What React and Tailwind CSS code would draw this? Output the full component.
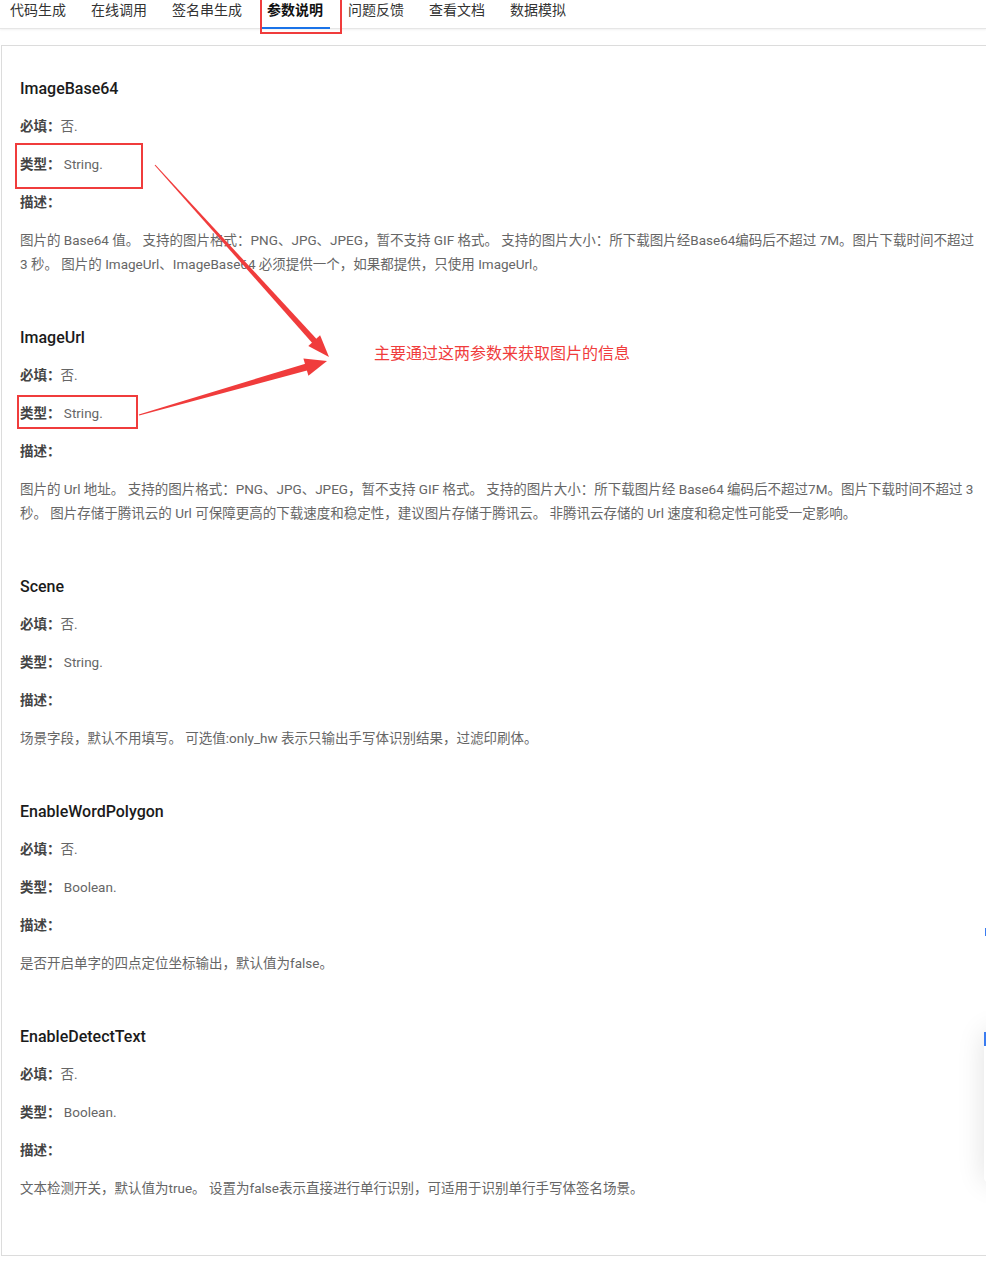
import { useState } from 'react';

const TABS = ['代码生成', '在线调用', '签名串生成', '参数说明', '问题反馈', '查看文档', '数据模拟'];

const PARAMS = [
  {
    name: 'ImageBase64',
    required: '否.',
    type: 'String.',
    desc: '图片的 Base64 值。 支持的图片格式：PNG、JPG、JPEG，暂不支持 GIF 格式。 支持的图片大小：所下载图片经Base64编码后不超过 7M。图片下载时间不超过 3 秒。 图片的 ImageUrl、ImageBase64 必须提供一个，如果都提供，只使用 ImageUrl。'
  },
  {
    name: 'ImageUrl',
    required: '否.',
    type: 'String.',
    desc: '图片的 Url 地址。 支持的图片格式：PNG、JPG、JPEG，暂不支持 GIF 格式。 支持的图片大小：所下载图片经 Base64 编码后不超过7M。图片下载时间不超过 3 秒。 图片存储于腾讯云的 Url 可保障更高的下载速度和稳定性，建议图片存储于腾讯云。 非腾讯云存储的 Url 速度和稳定性可能受一定影响。'
  },
  {
    name: 'Scene',
    required: '否.',
    type: 'String.',
    desc: '场景字段，默认不用填写。 可选值:only_hw 表示只输出手写体识别结果，过滤印刷体。'
  },
  {
    name: 'EnableWordPolygon',
    required: '否.',
    type: 'Boolean.',
    desc: '是否开启单字的四点定位坐标输出，默认值为false。'
  },
  {
    name: 'EnableDetectText',
    required: '否.',
    type: 'Boolean.',
    desc: '文本检测开关，默认值为true。 设置为false表示直接进行单行识别，可适用于识别单行手写体签名场景。'
  }
];

function ParamBlock({ param }) {
  return (
    <div className="flex flex-col gap-[14px]">
      <h3 className="text-[16px] leading-[24px] font-medium text-[#1b1b1b] mb-[-1px]">{param.name}</h3>
      <p className="text-[13.5px] leading-[24px] text-[#666]">
        <span className="font-bold text-[#444]">必填：</span>{param.required}
      </p>
      <p className="text-[13.5px] leading-[24px] text-[#666]">
        <span className="font-bold text-[#444]">类型：</span> {param.type}
      </p>
      <p className="text-[13.5px] leading-[24px] font-bold text-[#444]">描述：</p>
      <p className="text-[13.5px] leading-[24px] text-[#666]">{param.desc}</p>
    </div>
  );
}

function Annotations() {
  return (
    <svg className="absolute top-0 left-0 pointer-events-none" width="986" height="1269" viewBox="0 0 986 1269">
      {/* arrow from first box */}
      <polygon fill="#f03c3c" points="154.6,165.3 155.4,164.7 319.1,341.7 314.7,345.7" />
      <polygon fill="#f03c3c" points="329,357 308.3,346.1 320.1,335.3" />
      {/* arrow from second box */}
      <polygon fill="#f03c3c" points="138.8,414.4 139.2,415.6 310.7,369.5 308.7,362.7" />
      <polygon fill="#f03c3c" points="327,361 308.4,375.8 303.4,358.6" />
    </svg>
  );
}

export default function App() {
  const [active, setActive] = useState(3);

  return (
    <div
      className="relative w-full min-h-[1269px] bg-white overflow-hidden"
      style={{ fontFamily: "Roboto, 'Noto Sans CJK SC', sans-serif" }}
    >
      <div className="flex pl-[3px] gap-[11px] h-[29px] border-b border-[#e6e6e6] shadow-[0_1px_2px_rgba(0,0,0,0.06)]">
        {TABS.map((tab, i) => (
          <div
            key={tab}
            onClick={() => setActive(i)}
            className={`relative px-[7px] h-[29px] text-[14px] leading-[20px] cursor-pointer ${
              active === i ? 'font-bold text-[#111]' : 'text-[#333]'
            }`}
          >
            {tab}
            {active === i && <div className="absolute left-0 right-0 bottom-[0px] h-[2px] bg-[#1a73e8]" />}
          </div>
        ))}
      </div>

      <div className="mt-[16px] ml-[1px] flex flex-col gap-[50px] border-l border-t border-b border-[#dcdcdc] pl-[18px] pr-[8px] pt-[31px] pb-[55px]">
        {PARAMS.map((p) => (
          <ParamBlock key={p.name} param={p} />
        ))}
      </div>

      {/* red annotation boxes */}
      <div className="absolute left-[260px] top-[-2px] w-[82px] h-[36px] border-2 border-[#f03c3c]" />
      <div className="absolute left-[15px] top-[143px] w-[128px] h-[46px] border-2 border-[#f03c3c]" />
      <div className="absolute left-[17px] top-[395px] w-[121px] h-[34px] border-2 border-[#f03c3c]" />
      <div className="absolute left-[374px] top-[342px] text-[16px] leading-[24px] text-[#f03c3c]">
        主要通过这两参数来获取图片的信息
      </div>
      <Annotations />

      {/* floating side widget, mostly off-screen */}
      <div className="absolute left-[985px] top-[928px] w-[4px] h-[8px] bg-[#3b7cf0]" />
      <div className="absolute left-[984px] top-[1032px] w-[40px] h-[150px] bg-white rounded-[4px] shadow-[0_0_28px_rgba(0,0,0,0.12)]">
        <div className="w-[2px] h-[14px] bg-[#3b7cf0]" />
      </div>
    </div>
  );
}
